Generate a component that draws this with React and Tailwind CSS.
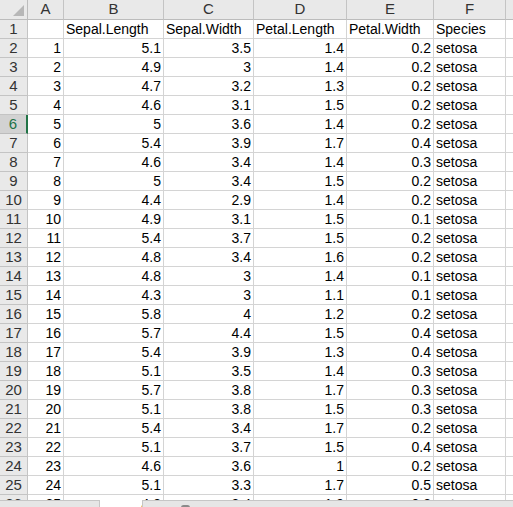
import React from "react";

const cols = [
  { key: "A", w: "w-[36px]" },
  { key: "B", w: "w-[100px]" },
  { key: "C", w: "w-[90px]" },
  { key: "D", w: "w-[93px]" },
  { key: "E", w: "w-[87px]" },
  { key: "F", w: "w-[72px]" },
];

const iris = [
  [5.1, 3.5, 1.4, 0.2], [4.9, 3, 1.4, 0.2], [4.7, 3.2, 1.3, 0.2], [4.6, 3.1, 1.5, 0.2],
  [5, 3.6, 1.4, 0.2], [5.4, 3.9, 1.7, 0.4], [4.6, 3.4, 1.4, 0.3], [5, 3.4, 1.5, 0.2],
  [4.4, 2.9, 1.4, 0.2], [4.9, 3.1, 1.5, 0.1], [5.4, 3.7, 1.5, 0.2], [4.8, 3.4, 1.6, 0.2],
  [4.8, 3, 1.4, 0.1], [4.3, 3, 1.1, 0.1], [5.8, 4, 1.2, 0.2], [5.7, 4.4, 1.5, 0.4],
  [5.4, 3.9, 1.3, 0.4], [5.1, 3.5, 1.4, 0.3], [5.7, 3.8, 1.7, 0.3], [5.1, 3.8, 1.5, 0.3],
  [5.4, 3.4, 1.7, 0.2], [5.1, 3.7, 1.5, 0.4], [4.6, 3.6, 1, 0.2], [5.1, 3.3, 1.7, 0.5],
  [4.8, 3.4, 1.9, 0.2],
];

const header = ["", "Sepal.Length", "Sepal.Width", "Petal.Length", "Petal.Width", "Species"];

function Row({ n, cells, selected }) {
  return (
    <div className="flex h-[19px] shrink-0">
      <div
        className={
          selected
            ? "w-[28px] shrink-0 flex items-center justify-center text-[15px] bg-[#d2d2d2] text-[#217346] border-b border-[#bcbcbc] border-r-2 border-r-[#217346]"
            : "w-[28px] shrink-0 flex items-center justify-center text-[15px] bg-[#e9e9e9] text-[#333] border-b border-r border-[#c4c4c4]"
        }
      >
        {n}
      </div>
      {cols.map((c, i) => (
        <div
          key={c.key}
          className={`${c.w} shrink-0 border-b border-r border-[#d4d4d4] px-[2px] flex items-center overflow-hidden whitespace-nowrap ${
            cells[i].right ? "justify-end" : "justify-start"
          }`}
        >
          {cells[i].v}
        </div>
      ))}
      <div className="flex-1 border-b border-[#d4d4d4]" />
    </div>
  );
}

export default function App() {
  const rows = [
    header.map((h) => ({ v: h, right: false })),
    ...iris.map((r, i) => [
      { v: i + 1, right: true },
      ...r.map((x) => ({ v: x, right: true })),
      { v: "setosa", right: false },
    ]),
  ];

  return (
    <div
      className="relative w-[513px] h-[507px] overflow-hidden bg-white text-[14px] text-black flex flex-col"
      style={{ fontFamily: '"Liberation Sans", Arial, sans-serif' }}
    >
      {/* column headers */}
      <div className="flex h-[20px] shrink-0 bg-[#e9e9e9] text-[15px] text-[#333]">
        <div className="w-[28px] shrink-0 border-b border-r border-[#bcbcbc] relative">
          <svg className="absolute left-[13px] top-[5px]" width="11" height="11" viewBox="0 0 11 11">
            <polygon points="11,0 11,11 0,11" fill="#b7b7b7" />
          </svg>
        </div>
        {cols.map((c) => (
          <div
            key={c.key}
            className={`${c.w} shrink-0 border-b border-r border-[#c4c4c4] border-b-[#bcbcbc] flex items-center justify-center`}
          >
            {c.key}
          </div>
        ))}
        <div className="flex-1 border-b border-[#bcbcbc]" />
      </div>

      {rows.map((cells, i) => (
        <Row key={i} n={i + 1} cells={cells} selected={i + 1 === 6} />
      ))}

      {/* bottom scroll bar strip */}
      <div className="absolute left-0 top-[500px] w-[100px] h-[7px] bg-[#e6e6e6] border-t border-r border-[#c6c6c6]" />
      <div className="absolute left-[142px] top-[500px] right-0 h-[7px] bg-[#e6e6e6] border-t border-l border-[#c6c6c6]">
        <div className="absolute left-[38px] top-[4px] w-[9px] h-[5px] rounded-full bg-[#8a8a8a]" />
      </div>
    </div>
  );
}
